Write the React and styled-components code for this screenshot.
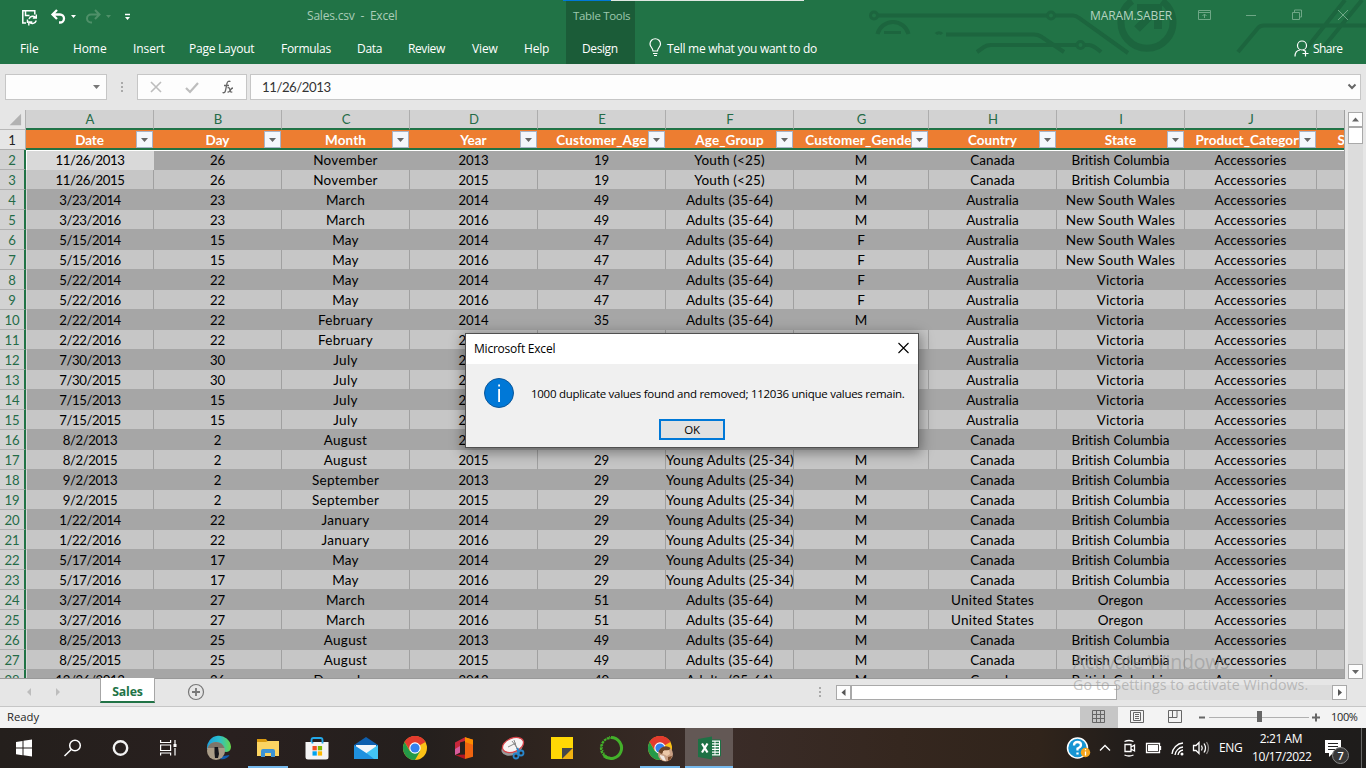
import React from 'react';
import styled, { createGlobalStyle, css } from 'styled-components';

const Global = createGlobalStyle`
  * { box-sizing: border-box; }
  html, body { margin: 0; padding: 0; overflow: hidden; }
  body { font-family: "Open Sans", "Noto Sans", sans-serif; font-size: 12px; color: #262626; }
`;

const Screen = styled.div`
  position: relative;
  width: 1366px;
  height: 768px;
  overflow: hidden;
  display: flex;
  flex-direction: column;
  background: #e6e6e6;
`;

/* ---------- ribbon ---------- */
const Ribbon = styled.header`
  position: relative;
  height: 64px;
  flex: none;
  display: flex;
  flex-direction: column;
  background: #217346;
  color: #fff;
`;
const Circuit = styled.svg`
  position: absolute;
  left: 860px;
  top: 0;
`;
const TitleRow = styled.div`
  position: relative;
  height: 32px;
  display: flex;
  align-items: center;
`;
const QuickAccess = styled.svg`
  flex: none;
  width: 307px;
  height: 32px;
`;
const FileTitle = styled.span`
  width: 259px;
  padding-bottom: 1px;
  font-size: 12px;
  letter-spacing: -0.2px;
  color: #a9cdb8;
  white-space: pre;
`;
const ContextTitle = styled.div`
  width: 69px;
  height: 32px;
  line-height: 32px;
  padding-left: 7px;
  font-size: 11.5px;
  letter-spacing: -0.32px;
  background: #1b5c38;
  color: #9dc8ae;
  white-space: nowrap;
`;
const UserName = styled.span`
  margin-left: 455px;
  width: 104px;
  padding-bottom: 1px;
  letter-spacing: -0.12px;
  color: #b4d3c0;
`;
const TabsRow = styled.nav`
  position: relative;
  height: 32px;
  display: flex;
`;
const Tab = styled.div`
  width: ${p => p.$w}px;
  height: 32px;
  line-height: 33px;
  padding-left: ${p => p.$pad || 0}px;
  letter-spacing: ${p => p.$ls ?? -0.1}px;
  white-space: nowrap;
  background: ${p => (p.$active ? '#1b5c38' : 'transparent')};
`;
const LoadStrip = styled.div`
  position: absolute;
  z-index: 2;
  left: 563px;
  top: 0;
  width: 241px;
  height: 1px;
  background: linear-gradient(90deg, #0078d7 48px, #e0e8e2 48px);
`;

/* ---------- formula bar ---------- */
const FormulaBar = styled.div`
  height: 46px;
  flex: none;
  display: flex;
  padding: 10px 5px 0;
`;
const Box = styled.div`
  width: ${p => p.$w}px;
  height: 26px;
  border: 1px solid #c6c6c6;
  background: #fdfdfd;
`;
const Dots = styled.svg`
  width: 30px;
  height: 26px;
`;
const FormulaInput = styled(Box)`
  margin-left: 3px;
  padding-left: 11px;
  display: flex;
  justify-content: space-between;
  font: 13.2px/25px Lato, sans-serif;
  letter-spacing: -0.45px;
  color: #333;
`;

/* ---------- grid ---------- */
const Workspace = styled.main`
  height: 569px;
  flex: none;
  display: flex;
`;
const Sheet = styled.div`
  width: 1345px;
  height: 569px;
  overflow: hidden;
  border-right: 1px solid #a0a0a0;
  border-bottom: 1px solid #999;
  font: 13.1px/20px Lato, sans-serif;
  color: #000;
`;
const ColumnHeads = styled.div`
  display: flex;
  height: 20px;
`;
const Corner = styled.svg`
  width: 26px;
  height: 20px;
  flex: none;
  border-right: 1px solid #b0b0b0;
  border-bottom: 1px solid #b8b8b8;
`;
const ColumnHead = styled.div`
  width: ${p => p.$w}px;
  flex: none;
  height: 20px;
  line-height: 19px;
  padding-left: 1px;
  text-align: center;
  color: #246b47;
  background: #d2d2d2;
  border-right: 1px solid #adadad;
  border-bottom: 2px solid #217346;
`;
const Row = styled.div`
  display: flex;
  height: 20px;
`;
const RowHead = styled.div`
  width: 26px;
  flex: none;
  height: 20px;
  padding-right: 1px;
  text-align: center;
  letter-spacing: -0.2px;
  border-bottom: 1px solid #b0b0b0;
  ${p => p.$selected
    ? css`background: #d2d2d2; color: #246b47; border-right: 2px solid #217346; padding-right: 0; line-height: 21px;`
    : css`background: #e6e6e6; color: #222; border-right: 1px solid #b0b0b0; line-height: 20px;`}
`;
const HeadCell = styled.div`
  width: ${p => p.$w}px;
  flex: none;
  height: 20px;
  display: flex;
  justify-content: center;
  position: relative;
  overflow: hidden;
  background: #ed7d31;
  border-bottom: 2px solid #217346;
  color: #fff;
  font-size: 13.5px;
  font-weight: 700;
  line-height: 20px;
  letter-spacing: ${p => p.$ls || 0}px;
  padding-right: 1px;
  white-space: nowrap;
`;
const Filter = styled.svg`
  position: absolute;
  right: 1px;
  top: 1px;
  background: #f4f6fb;
  border: 1px solid #a9b3c6;
`;
const Cell = styled.div`
  width: ${p => p.$w}px;
  flex: none;
  height: 20px;
  line-height: 21px;
  text-align: center;
  white-space: nowrap;
  font-size: ${p => p.$size}px;
  letter-spacing: ${p => p.$ls || 0}px;
  padding-right: 1px;
  ${p => p.$dark
    ? css`background: #a6a6a6;`
    : css`background: #c6c6c6; border-right: 1px solid #a0a0a0; border-bottom: 1px solid #a6a6a6; padding-right: 0;`}
  ${p => p.$first && css`border-left: 1px solid #d8d8d8;`}
  ${p => p.$top && css`border-top: 1px solid #fff; line-height: 19px;`}
  ${p => p.$active && css`background: #d9d9d9; border-left-color: #fff;`}
`;
const VScroll = styled.div`
  margin: 2px 0 0 3px;
  width: 15px;
  height: 567px;
  display: flex;
  flex-direction: column;
  background: #dcdcdc;
`;
const ScrollButton = styled.svg`
  flex: none;
  width: 15px;
  height: 15px;
  background: #fdfdfd;
  border: 1px solid #a9a9a9;
`;
const VThumb = styled.div`
  height: 17px;
  margin-bottom: auto;
  background: #fff;
  border: 1px solid #a9a9a9;
`;

/* ---------- sheet tabs and status ---------- */
const SheetBar = styled.div`
  height: 28px;
  flex: none;
  display: flex;
  border-bottom: 1px solid #c6c6c6;
`;
const NavArrows = styled.svg`
  width: 100px;
  height: 26px;
`;
const SheetTab = styled.div`
  width: 55px;
  height: 25px;
  margin-top: -1px;
  background: #fff;
  border: solid #a6a6a6;
  border-width: 0 1px;
  border-bottom: 2px solid #217346;
  color: #217346;
  font-size: 12.3px;
  font-weight: 700;
  line-height: 27px;
  letter-spacing: -0.15px;
  text-align: center;
`;
const AddSheet = styled.svg`
  margin-left: 32px;
  width: 18px;
  height: 26px;
`;
const Grip = styled.svg`
  margin-left: 613px;
  width: 18px;
  height: 26px;
`;
const HScroll = styled.div`
  width: 511px;
  height: 15px;
  margin-top: 6px;
  display: flex;
  background: #dcdcdc;
`;
const HThumb = styled.div`
  width: 266px;
  height: 15px;
  margin-right: auto;
  background: #fff;
  border: 1px solid #a9a9a9;
`;
const StatusBar = styled.div`
  height: 21px;
  flex: none;
  display: flex;
  justify-content: space-between;
  background: #f3f3f3;
  font-size: 11.3px;
  line-height: 20px;
  padding-left: 7px;
`;
const StatusTools = styled.div`
  display: flex;
  width: 286px;
`;
const ZoomText = styled.span`
  width: 34px;
  font-size: 11px;
  line-height: 19px;
  letter-spacing: -0.35px;
  white-space: nowrap;
`;

/* ---------- taskbar ---------- */
const Taskbar = styled.footer`
  height: 40px;
  flex: none;
  display: flex;
  background: linear-gradient(90deg, #241f1c 0, #29201f 230px, #241f1d 420px, #30251f 560px, #3a2c28 720px, #35271f 900px, #30241b 1040px, #211d1b 1130px, #1e1c1b 1366px);
  color: #fff;
`;
const TaskButton = styled.div`
  width: ${p => p.$w || 49}px;
  height: 40px;
  display: flex;
  justify-content: center;
  margin-left: ${p => p.$gap || 0}px;
  padding-right: 1px;
  ${p => p.$open && css`
    background: linear-gradient(#76b9ed, #76b9ed) 4px 38px / 40px 2px no-repeat;
  `}
  ${p => p.$active && css`
    width: 48px;
    padding: 0;
    background: linear-gradient(#635855 38px, #76b9ed 38px);
  `}
`;
const Tray = styled.div`
  margin-left: auto;
  width: 306px;
  display: flex;
`;
const Lang = styled.span`
  width: 32px;
  padding-left: 1px;
  line-height: 40px;
  letter-spacing: -0.3px;
`;
const Clock = styled.div`
  width: 60px;
  text-align: center;
  line-height: 18px;
  padding: 2px 0 0 2px;
  letter-spacing: -0.42px;
  white-space: nowrap;
`;

/* ---------- overlays ---------- */
const Watermark = styled.div`
  position: absolute;
  left: 1073px;
  top: 649px;
  color: rgba(140, 140, 140, 0.5);
  white-space: nowrap;
`;
const WatermarkTitle = styled.div`
  font-size: 19.5px;
  line-height: 26px;
  letter-spacing: -0.25px;
`;
const WatermarkText = styled.div`
  font-size: 14.2px;
  line-height: 20px;
  letter-spacing: 0.08px;
`;
const Dialog = styled.div`
  position: absolute;
  left: 465px;
  top: 333px;
  width: 454px;
  height: 115px;
  display: flex;
  flex-direction: column;
  background: #f0f0f0;
  border: 1px solid #505050;
  box-shadow: 0 3px 12px 2px rgba(0, 0, 0, 0.38);
  color: #000;
`;
const DialogTitle = styled.div`
  height: 30px;
  padding: 0 9px 0 8px;
  display: flex;
  justify-content: space-between;
  line-height: 30px;
  letter-spacing: -0.22px;
  background: #fff;
`;
const DialogBody = styled.div`
  display: flex;
  height: 55px;
  padding: 14px 0 0 18px;
  gap: 17px;
  line-height: 32px;
  font-size: 11.5px;
  white-space: nowrap;
  letter-spacing: -0.27px;
`;
const InfoIcon = styled.svg`
  flex: none;
  width: 30px;
  height: 30px;
`;
const OkButton = styled.button`
  width: 66px;
  height: 21px;
  margin-left: 193px;
  padding: 0;
  font: 11.5px/17px "Open Sans", sans-serif;
  letter-spacing: -0.3px;
  color: #000;
  background: #e1e1e1;
  border: 2px solid #0078d7;
`;

/* ---------- data ---------- */
const COLUMNS = [
  ['A', 128, 'Date'], ['B', 128, 'Day'], ['C', 128, 'Month'], ['D', 128, 'Year'],
  ['E', 128, 'Customer_Age'], ['F', 128, 'Age_Group'], ['G', 135, 'Customer_Gender'],
  ['H', 128, 'Country'], ['I', 128, 'State'], ['J', 132, 'Product_Category'],
];
const HEAD_SPACING = [-0.1, 0, 0.1, 0, 0.15, 0.1, 0.15, 0, 0.05, 0.08];
const YA = 'Young Adults (25-34)';
const AD = 'Adults (35-64)';
const YO = 'Youth (<25)';
const BC = 'British Columbia';
const NSW = 'New South Wales';
const DATA = [
  ['11/26/2013', 26, 'November', 2013, 19, YO, 'M', 'Canada', BC],
  ['11/26/2015', 26, 'November', 2015, 19, YO, 'M', 'Canada', BC],
  ['3/23/2014', 23, 'March', 2014, 49, AD, 'M', 'Australia', NSW],
  ['3/23/2016', 23, 'March', 2016, 49, AD, 'M', 'Australia', NSW],
  ['5/15/2014', 15, 'May', 2014, 47, AD, 'F', 'Australia', NSW],
  ['5/15/2016', 15, 'May', 2016, 47, AD, 'F', 'Australia', NSW],
  ['5/22/2014', 22, 'May', 2014, 47, AD, 'F', 'Australia', 'Victoria'],
  ['5/22/2016', 22, 'May', 2016, 47, AD, 'F', 'Australia', 'Victoria'],
  ['2/22/2014', 22, 'February', 2014, 35, AD, 'M', 'Australia', 'Victoria'],
  ['2/22/2016', 22, 'February', 2016, 35, AD, 'M', 'Australia', 'Victoria'],
  ['7/30/2013', 30, 'July', 2013, 32, YA, 'F', 'Australia', 'Victoria'],
  ['7/30/2015', 30, 'July', 2015, 32, YA, 'F', 'Australia', 'Victoria'],
  ['7/15/2013', 15, 'July', 2013, 34, YA, 'M', 'Australia', 'Victoria'],
  ['7/15/2015', 15, 'July', 2015, 34, YA, 'M', 'Australia', 'Victoria'],
  ['8/2/2013', 2, 'August', 2013, 29, YA, 'M', 'Canada', BC],
  ['8/2/2015', 2, 'August', 2015, 29, YA, 'M', 'Canada', BC],
  ['9/2/2013', 2, 'September', 2013, 29, YA, 'M', 'Canada', BC],
  ['9/2/2015', 2, 'September', 2015, 29, YA, 'M', 'Canada', BC],
  ['1/22/2014', 22, 'January', 2014, 29, YA, 'M', 'Canada', BC],
  ['1/22/2016', 22, 'January', 2016, 29, YA, 'M', 'Canada', BC],
  ['5/17/2014', 17, 'May', 2014, 29, YA, 'M', 'Canada', BC],
  ['5/17/2016', 17, 'May', 2016, 29, YA, 'M', 'Canada', BC],
  ['3/27/2014', 27, 'March', 2014, 51, AD, 'M', 'United States', 'Oregon'],
  ['3/27/2016', 27, 'March', 2016, 51, AD, 'M', 'United States', 'Oregon'],
  ['8/25/2013', 25, 'August', 2013, 49, AD, 'M', 'Canada', BC],
  ['8/25/2015', 25, 'August', 2015, 49, AD, 'M', 'Canada', BC],
  ['12/26/2013', 26, 'December', 2013, 40, AD, 'M', 'Canada', BC],
];
const SPACING = [-0.42, -0.15, 0.3, -0.15, -0.15, 0.15, 0, 0.08, 0.15, 0.25, 0];
const VALUE_SPACING = { [NSW]: 0.28, [BC]: 0.02, 'United States': 0.25 };

const FilterButton = () => (
  <Filter width="17" height="17" viewBox="0 0 15 15"><path d="M4 6h7l-3.5 4z" fill="#666" /></Filter>
);

/* ---------- icons ---------- */
const CircuitArt = () => (
  <Circuit width="506" height="64" viewBox="860 0 506 64" fill="none" stroke="#1c653e" strokeWidth="4">
    <circle cx="874" cy="15.5" r="3.5" strokeWidth="3" />
    <path d="M878 15.5H1047M1055 15.5H1073Q1076 15.5 1079 18L1128 53" />
    <circle cx="1051" cy="15.5" r="3.5" strokeWidth="3" />
    <path d="M877.500 34A16 16 0 0 1 908.500 34" />
    <path d="M884 32.500H901" strokeWidth="3" />
    <path d="M936 34A4 4 0 0 1 942 34" strokeWidth="3" />
    <path d="M946 34.500H1034Q1038 34.500 1041 36.500L1064 52M977 52L984 47Q987 45 991 45H1076M1085 45H1089Q1093 45 1101 52" />
    <circle cx="1080.500" cy="45" r="3.500" strokeWidth="3" />
    <path d="M1132 1A26 26 0 1 0 1162 1" strokeWidth="7" />
    <path d="M1137 29L1158 8M1137 8H1158V29" strokeWidth="8" />
    <path d="M1238 52L1258 28Q1260 25.500 1264 25.500H1366M1345 0L1306 49M1362 0L1322 49" />
  </Circuit>
);

const QuickIcons = () => (
  <QuickAccess viewBox="0 0 307 32" fill="none" stroke="#fff" strokeWidth="1.500">
    <path d="M26 23H22.800V10.800H34.800V14.500M25.500 11v4.500h4" />
    <path d="M27.500 23v-3.500" />
    <path d="M29 19a4.200 4.200 0 0 1 7-1.500M36.300 14.500v3.500h-3.500M36.300 20.500a4.200 4.200 0 0 1-7 1.800M28.800 25.500v-3.500h3.500" strokeWidth="1.400" />
    <path d="M52.500 14.500H60a4 4 0 0 1 0 8h-1M57 10l-4.500 4.500L57 19" strokeWidth="2.300" />
    <path d="M71 15h5l-2.500 3zM125 17h5l-2.500 3z" fill="#fff" stroke="none" />
    <path d="M125 14.500h5" />
    <g stroke="#4f9069"><path d="M99 14.500H91a4 4 0 0 0 0 8h1M95 10l4.500 4.500L95 19" strokeWidth="2" /></g>
    <path d="M106 15h5l-2.500 3z" fill="#4f9069" stroke="none" />
  </QuickAccess>
);

const WindowControls = () => (
  <svg width="172" height="32" viewBox="1194 0 172 32" fill="none" stroke="#6ea786">
    <path d="M1198.500 10.500h12v9h-12zM1198.500 12.500h12M1204.500 18v-4M1202.500 16l2-2 2 2M1246 15.500h10M1292.500 12.500h7v7h-7zM1294.500 12v-2h7v7h-2M1338 10l10 10M1348 10l-10 10" />
  </svg>
);

const Chrome = ({ badge }) => (
  <svg width="26" height="40" viewBox="0 0 26 40">
    <g transform="translate(1,8)">
      <circle cx="12" cy="12" r="12" fill="#fbc116" />
      <path d="M12 12L1.600 6A12 12 0 0 1 22.400 6z" fill="#e33b2e" />
      <path d="M12 6H22.400A12 12 0 0 0 1.600 6L6.500 14z" fill="#e33b2e" />
      <path d="M1.600 6A12 12 0 0 0 12 24L17.200 15 12 12 6.800 15z" fill="#249a48" />
      <circle cx="12" cy="12" r="5.700" fill="#fff" />
      <circle cx="12" cy="12" r="4.600" fill="#3380ef" />
      {badge && (
        <g>
          <circle cx="17.500" cy="18" r="7.500" fill="#c9a084" />
          <path d="M10.500 16a7.500 7.500 0 0 1 12-4l-2 3-4-1-3 4z" fill="#6b4426" />
          <path d="M15 15l6-1 1 4-3 2-4-2z" fill="#ecc8a8" />
          <path d="M20 21l4-1a7 7 0 0 1-4 5z" fill="#7a4a2a" />
          <path d="M12 19l4 1 2 5a7 7 0 0 1-6-5z" fill="#f2e9e2" />
        </g>
      )}
    </g>
  </svg>
);

const Icon = ({ w = 26, children, ...rest }) => (
  <svg width={w} height="40" viewBox={`0 0 ${w} 40`} fill="none" {...rest}>{children}</svg>
);

const TaskIcons = () => (
  <>
    <TaskButton $w={48}><Icon><path d="M5 14l6.500-1v6.500H5zM12.500 12.800L21 11.600V19.500h-8.500zM5 20.500h6.500v6.700L5 26.300zM12.500 20.500H21v8l-8.500-1.200z" fill="#fff" /></Icon></TaskButton>
    <TaskButton $w={48}><Icon stroke="#fff" strokeWidth="1.500"><circle cx="16" cy="17.500" r="5.300" /><path d="M12.200 21.500L5.500 28" /></Icon></TaskButton>
    <TaskButton $w={48}><Icon stroke="#f2f2f2" strokeWidth="2.400"><circle cx="13.500" cy="20" r="6.700" /></Icon></TaskButton>
    <TaskButton $w={48}><Icon stroke="#fff" strokeWidth="1.200"><path d="M5.600 12v2.500h10V12M5.600 27.500v-2.500h10v2.500M5.600 17h10v5.500h-10zM20 12v4M20 20v7.500" /><path d="M18.500 16h3v3h-3z" fill="#fff" stroke="none" /></Icon></TaskButton>
    <TaskButton $gap={3}>
      <Icon>
        <defs><linearGradient id="edge" x2="1"><stop offset="0" stopColor="#1c9fdc" /><stop offset=".5" stopColor="#29bfd0" /><stop offset="1" stopColor="#68d748" /></linearGradient></defs>
        <path d="M1 21A12 12 0 0 1 25 18.500C25 24 20 25 17 23z" fill="url(#edge)" />
        <path d="M14 31c4 1 8-1 9.500-4l-6 1z" fill="#0f5cae" />
        <circle cx="10" cy="23" r="9" fill="#a99c87" />
        <path d="M1.500 20a9 9 0 0 1 17 0z" fill="#7d756a" />
        <path d="M8.500 19h3.500l1 7-1 4H9l-.5-5z" fill="#16161c" />
      </Icon>
    </TaskButton>
    <TaskButton $open>
      <Icon><path d="M2 11h9l1.500 2H24v4H2z" fill="#d99a10" /><path d="M2 14h9l2-1h11v15H2z" fill="#fcd462" /><path d="M6 29v-6q0-2 2-2h10q2 0 2 2v6h-4v-4h-6v4z" fill="#3c93d5" /></Icon>
    </TaskButton>
    <TaskButton>
      <Icon><path d="M7.500 16v-4q0-2 2-2h7q2 0 2 2v4" stroke="#23a9ea" strokeWidth="1.800" /><path d="M1.500 14h23v15q0 2.500-2.500 2.500H4q-2.500 0-2.500-2.500z" fill="#f4f4f4" /><path d="M7.500 14h1.800v1.500H7.500zM17.600 14h1.800v1.500h-1.800z" fill="#23a9ea" /><path d="M8.500 18h4.300v4.300H8.500z" fill="#f25022" /><path d="M13.800 18h4.300v4.300h-4.300z" fill="#7fba00" /><path d="M8.500 23.300h4.300v4.300H8.500z" fill="#00a4ef" /><path d="M13.800 23.300h4.300v4.300h-4.300z" fill="#ffb900" /></Icon>
    </TaskButton>
    <TaskButton>
      <Icon><path d="M1 17L13 9l12 8v3H1z" fill="#0e5fae" /><path d="M3 17h20v4l-9 5-11-6z" fill="#f3f6f9" /><path d="M1 17l13 8.500 11-7.500v13H1z" fill="#1f91df" /><path d="M25 17L13.500 25 21 31h4z" fill="#42c5f4" /></Icon>
    </TaskButton>
    <TaskButton><Chrome /></TaskButton>
    <TaskButton>
      <Icon>
        <path d="M4 14.500L14 9.200V13l-5 1.500v10L4 27z" fill="#c8273a" />
        <path d="M4 21l5-3v6.500L4 27z" fill="#d65c9c" />
        <path d="M14 9.200l8 2.500v17L14 31z" fill="#ef6410" />
        <path d="M14 9.200l8 2.500v5L14 14z" fill="#fb8c00" />
        <path d="M4 27l10-.5V31z" fill="#b31621" />
      </Icon>
    </TaskButton>
    <TaskButton>
      <Icon><ellipse cx="12" cy="20" rx="11" ry="7" transform="rotate(-22 12 20)" fill="#9a9a9a" /><ellipse cx="13" cy="17" rx="11" ry="6.800" transform="rotate(-22 13 17)" fill="#f7f5f5" stroke="#d8464b" strokeWidth="1.300" /><path d="M8 19l8-4M14 12l3 9M12 13l6 8" stroke="#888" /><circle cx="16" cy="28" r="2.500" stroke="#2987cc" strokeWidth="1.800" /><circle cx="21" cy="25" r="2.500" stroke="#2987cc" strokeWidth="1.800" /><path d="M17.500 20l1 6" stroke="#2987cc" strokeWidth="2" /></Icon>
    </TaskButton>
    <TaskButton><Icon><path d="M2 9h22v11l-11 11H2z" fill="#ffd805" /><path d="M13 31V20h11z" fill="#45474b" /><path d="M24 20v11H13z" fill="#f0b211" /></Icon></TaskButton>
    <TaskButton>
      <Icon stroke="#43b02a">
        <path d="M13 9.500A10.500 10.500 0 1 1 6 27.800" strokeWidth="3" />
        <path d="M13 30A10 10 0 0 1 13 10" strokeWidth="2.200" strokeDasharray="2.600 .8" />
        <path d="M10.500 29.500A11.300 11.300 0 0 1 12 8.700" strokeWidth="1.300" strokeDasharray="1.300 1.500" />
      </Icon>
    </TaskButton>
    <TaskButton $open><Chrome badge /></TaskButton>
    <TaskButton $active>
      <Icon><path d="M13 12h11.500v16H13z" fill="#fff" stroke="#1e7145" /><path d="M15 14.500h3.500M19.500 14.500h3.500M15 17.300h3.500M19.500 17.300h3.500M15 20h3.500M19.500 20h3.500M15 22.700h3.500M19.500 22.700h3.500M15 25.500h3.500M19.500 25.500h3.500" stroke="#1e7145" strokeWidth="1.500" /><path d="M2 11l14-2.500v23L2 29z" fill="#1e7145" /><path d="M6 15.500l5.500 9M11.500 15.500l-5.500 9" stroke="#fff" strokeWidth="2.200" /></Icon>
    </TaskButton>
  </>
);

const TrayIcons = () => (
  <svg width="158" height="40" viewBox="1060 728 158 40" fill="none" stroke="#fff" strokeWidth="1.300">
    <circle cx="1077.500" cy="748" r="10" fill="#1695d3" strokeWidth="1.500" />
    <path d="M1074 745.500q0-3.500 3.500-3.500t3.500 3q0 2-3.500 3.500v2M1077.500 752.500v2" strokeWidth="2.300" />
    <circle cx="1085.500" cy="752.500" r="4.700" fill="#f5a51c" stroke="none" /><path d="M1085.500 749v1.300M1085.500 751.500v4" />
    <path d="M1100 750.500l5-5 5 5" />
    <path d="M1125 744.500h6v7h-6zM1131 747l3.500-2v6l-3.500-2M1124.500 741.500q4.500-2 9 0M1124.500 755q4.500 2 9 0" />
    <path d="M1146.500 743.500h13v9h-13zM1160.500 746v4" /><path d="M1148 745h10v6h-10z" fill="#fff" stroke="none" />
    <path d="M1172 754a12 12 0 0 1 11-11M1175 755a9 9 0 0 1 8-8M1178 755a6 6 0 0 1 5-5" /><circle cx="1182" cy="754" r="1.500" fill="#fff" stroke="none" />
    <path d="M1193.500 745.500h2.500l3-3v11l-3-3h-2.500zM1201.500 745.500q1.500 2.500 0 5M1204 743.500q3 4.500 0 9" /><path d="M1206.500 742q4 6 0 12" stroke="#8a8886" />
  </svg>
);

export default function App() {
  return (
    <Screen>
      <Global />
      <Ribbon>
        <CircuitArt />
        <LoadStrip />
        <TitleRow>
          <QuickIcons />
          <FileTitle>{'Sales.csv  -  Excel'}</FileTitle>
          <ContextTitle>Table Tools</ContextTitle>
          <UserName>MARAM.SABER</UserName>
          <WindowControls />
        </TitleRow>
        <TabsRow>
          <Tab $w={73} $pad={20}>File</Tab>
          <Tab $w={60}>Home</Tab>
          <Tab $w={56}>Insert</Tab>
          <Tab $w={92} $ls={-0.25}>Page Layout</Tab>
          <Tab $w={76} $ls={-0.3}>Formulas</Tab>
          <Tab $w={51} $ls={-0.3}>Data</Tab>
          <Tab $w={64} $ls={-0.4}>Review</Tab>
          <Tab $w={52}>View</Tab>
          <Tab $w={42} $ls={-0.2}>Help</Tab>
          <Tab $w={69} $pad={16} $ls={-0.4} $active>Design</Tab>
          <svg width="32" height="32" viewBox="0 0 32 32" fill="none" stroke="#fff" strokeWidth="1.200">
            <path d="M18 19c0-3-3-4-3-7a5.200 5.200 0 0 1 10.500 0c0 3-3 4-3 7zM18 21.500h4.500M19 23.500h3" />
          </svg>
          <Tab $w={627} $ls={-0.29}>Tell me what you want to do</Tab>
          <svg width="19" height="32" viewBox="0 0 19 32" fill="none" stroke="#fff" strokeWidth="1.200">
            <circle cx="8" cy="13.500" r="4.500" /><path d="M1 24.500q0-6 5-6.500M9 18l2 1M8.500 21.500h6M11.500 18.500v6" />
          </svg>
          <Tab $w={40} $ls={-0.55}>Share</Tab>
        </TabsRow>
      </Ribbon>

      <FormulaBar>
        <Box $w={102}>
          <svg width="100" height="24"><path d="M87 10h7l-3.500 4z" fill="#777" /></svg>
        </Box>
        <Dots viewBox="0 0 30 26"><path d="M14 8h2v2h-2zM14 12h2v2h-2zM14 16h2v2h-2z" fill="#aaa" /></Dots>
        <Box $w={110}>
          <svg width="108" height="24" viewBox="138 75 108 24" fill="none">
            <path d="M151 82l10 10M161 82l-10 10" stroke="#bdbdbd" strokeWidth="1.600" />
            <path d="M186 88l4 4 8-9" stroke="#bdbdbd" strokeWidth="2.200" />
            <path d="M230.500 81.500q-3-1-3.500 2l-1.500 7q-.6 3-3 2M224 85.500h5M227.500 88q1.500-1 2 .5l1 3q.5 1 1.800.3M233 88q-1.500 0-2.500 2l-1.500 1.800q-.8.5-1.500 0" stroke="#666" strokeWidth="1.300" />
          </svg>
        </Box>
        <FormulaInput $w={1111}>
          11/26/2013
          <svg width="16" height="24"><path d="M4.500 9.500l3.500 3.500 3.500-3.500" fill="none" stroke="#666" strokeWidth="2" /></svg>
        </FormulaInput>
      </FormulaBar>

      <Workspace>
        <Sheet>
          <ColumnHeads>
            <Corner viewBox="0 0 26 20"><path d="M22 4v12H10z" fill="#b2b2b2" /></Corner>
            {COLUMNS.map(([letter, w]) => <ColumnHead key={letter} $w={w}>{letter}</ColumnHead>)}
            <ColumnHead $w={28} />
          </ColumnHeads>
          <Row>
            <RowHead>1</RowHead>
            {COLUMNS.map(([letter, w, name], c) => (
              <HeadCell key={letter} $w={w} $ls={HEAD_SPACING[c]}>{name}<FilterButton /></HeadCell>
            ))}
            <HeadCell $w={128} $ls={0.2}>Sub_Category</HeadCell>
          </Row>
          {DATA.map((row, r) => (
            <Row key={r}>
              <RowHead $selected>{r + 2}</RowHead>
              {[...row, 'Accessories', ''].map((value, c) => (
                <Cell
                  key={c}
                  $w={c === 10 ? 128 : COLUMNS[c][1]}
                  $dark={r % 2 === 0}
                  $first={c === 0}
                  $top={r === 0}
                  $active={r === 0 && c === 0}
                  $size={c === 0 || typeof value === 'number' ? 13.2 : 13.5}
                  $ls={VALUE_SPACING[value] ?? SPACING[c]}
                >
                  {value}
                </Cell>
              ))}
            </Row>
          ))}
        </Sheet>
        <VScroll>
          <ScrollButton viewBox="0 0 13 13"><path d="M3 8.500h7L6.500 4.500z" fill="#666" /></ScrollButton>
          <VThumb />
          <ScrollButton viewBox="0 0 13 13"><path d="M3 5h7L6.500 9z" fill="#666" /></ScrollButton>
        </VScroll>
      </Workspace>

      <SheetBar>
        <NavArrows viewBox="0 0 100 26"><path d="M31 9v8l-4-4zM56 9v8l4-4z" fill="#bdbdbd" /></NavArrows>
        <SheetTab>Sales</SheetTab>
        <AddSheet viewBox="0 0 18 26" fill="none" stroke="#777"><circle cx="9" cy="13" r="7.500" strokeWidth="1.200" /><path d="M5 13h8M9 9v8" strokeWidth="1.800" /></AddSheet>
        <Grip viewBox="0 0 18 26"><path d="M1 8h2v2H1zM1 12h2v2H1zM1 16h2v2H1z" fill="#aaa" /></Grip>
        <HScroll>
          <ScrollButton viewBox="0 0 13 13"><path d="M8.500 3v7L4.500 6.500z" fill="#555" /></ScrollButton>
          <HThumb />
          <ScrollButton viewBox="0 0 13 13"><path d="M5 3v7l4-3.500z" fill="#555" /></ScrollButton>
        </HScroll>
      </SheetBar>
      <StatusBar>
        <span>Ready</span>
        <StatusTools>
          <svg width="251" height="21" viewBox="1080 707 251 21" fill="none" stroke="#666">
            <path d="M1080 707h38v21h-38z" fill="#c6c6c6" stroke="none" />
            <path d="M1092.500 710.500h12v12h-12zM1096.500 710v12M1100.500 710v12M1092 714.500h12M1092 718.500h12" />
            <path d="M1130.500 710.500h13v12h-13zM1133.500 712.500h7v8h-7zM1135 714.500h4M1135 716.500h4M1135 718.500h4" />
            <path d="M1168.500 710.500h13v12h-13zM1168 717.500h9v-7M1172.500 710v7" />
            <path d="M1209 717.500h100" stroke="#b0b0b0" />
            <path d="M1257 711h5v11h-5z" fill="#666" stroke="none" />
            <path d="M1199 717.500h6M1312 717.500h8M1316 713.500v8" strokeWidth="2" />
          </svg>
          <ZoomText>100%</ZoomText>
        </StatusTools>
      </StatusBar>

      <Taskbar>
        <TaskIcons />
        <Tray>
          <TrayIcons />
          <Lang>ENG</Lang>
          <Clock>2:21 AM<br />10/17/2022</Clock>
          <svg width="56" height="40" viewBox="1310 728 56 40" fill="none">
            <path d="M1325 740h16v13h-8l-4 4v-4h-4z" fill="#fff" />
            <path d="M1328 743.500h10M1328 746.500h10M1328 749.500h7" stroke="#222" />
            <circle cx="1340.500" cy="755.500" r="8" fill="#383838" stroke="#8a8a8a" />
            <text x="1337.500" y="759.500" fontSize="11" fontWeight="600" fill="#fff">7</text>
            <path d="M1361.500 728v40" stroke="#666" />
          </svg>
        </Tray>
      </Taskbar>

      <Watermark>
        <WatermarkTitle>Activate Windows</WatermarkTitle>
        <WatermarkText>Go to Settings to activate Windows.</WatermarkText>
      </Watermark>

      <Dialog>
        <DialogTitle>
          Microsoft Excel
          <svg width="11" height="30" viewBox="0 0 11 30" stroke="#000" strokeWidth="1.100"><path d="M.5 9l10 10M10.500 9l-10 10" /></svg>
        </DialogTitle>
        <DialogBody>
          <InfoIcon viewBox="0 0 30 30">
            <circle cx="15" cy="15" r="14.500" fill="#0078d7" stroke="#0a5699" />
            <path d="M14.200 6.500h1.800v2h-1.800zM14.200 11h1.800v13h-1.800z" fill="#fff" />
          </InfoIcon>
          <span>1000 duplicate values found and removed; 112036 unique values remain.</span>
        </DialogBody>
        <OkButton>OK</OkButton>
      </Dialog>
    </Screen>
  );
}
